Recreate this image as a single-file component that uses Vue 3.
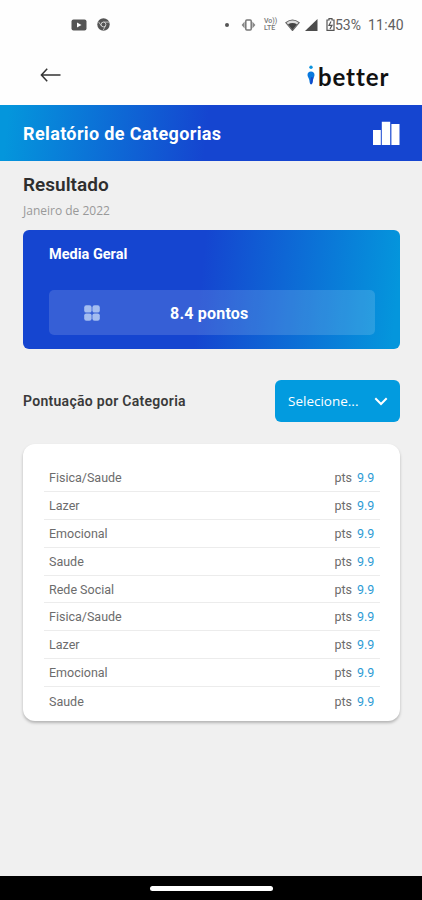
<template>
    <div class="screen">
        <div class="statusbar">
            <div class="apps">
                <svg width="16" height="12" viewBox="0 0 16 12">
                    <rect x="0.5" y="0.5" width="15" height="11" rx="2" fill="#555" />
                    <path d="M6 3.5 L10.5 6 L6 8.5 Z" fill="#fff" />
                </svg>
                <svg width="13" height="13" viewBox="0 0 13 13">
                    <circle cx="6.5" cy="6.5" r="6.2" fill="#555" />
                    <path d="M1.5 3.8 L4.5 8 M6.5 4.1 H12 M8.5 7.7 L6.2 12.3" stroke="#ccc" stroke-width="0.9" fill="none" />
                    <circle cx="6.5" cy="6.5" r="2.4" fill="#555" stroke="#ddd" stroke-width="0.9" />
                </svg>
            </div>
            <div class="system">
                <span class="dot"></span>
                <svg class="vibrate" width="15" height="12" viewBox="0 0 15 12">
                    <rect x="4.8" y="1" width="5.4" height="10" rx="1" fill="none" stroke="#777" stroke-width="1.5" />
                    <path d="M3.6 2.5 V9.5 L0.6 6 Z M11.4 2.5 V9.5 L14.4 6 Z" fill="#888" />
                </svg>
                <span class="volte">Vo))<br />LTE</span>
                <svg class="wifi" width="15" height="12" viewBox="0 0 15 12">
                    <path d="M0.8 3.6 Q7.5 -1.6 14.2 3.6 L7.5 11.6 Z" fill="#ddd" stroke="#666" stroke-width="1.1" />
                    <path d="M3 5.2 Q7.5 2.6 12 5.2 L7.5 11 Z" fill="#444" />
                </svg>
                <svg class="signal" width="13" height="12" viewBox="0 0 13 12">
                    <path d="M12.5 0 V12 H0 Z" fill="#4c4c4c" />
                </svg>
                <svg class="battery" width="9" height="13" viewBox="0 0 9 13">
                    <path d="M3 0.7 H6 V2 H8 V12.3 H1 V2 H3 Z" fill="none" stroke="#555" stroke-width="1.2" />
                    <path d="M5 3.5 L3 7.3 H6 L4 11" fill="none" stroke="#555" stroke-width="1.2" />
                </svg>
                <span class="percent">53%</span>
                <span class="clock">11:40</span>
            </div>
        </div>

        <header class="topbar">
            <svg class="back" width="21" height="14" viewBox="0 0 21 14">
                <path d="M7.2 0.8 L1.4 7 L7.2 13.2 M1.4 7 H20.5" fill="none" stroke="#333" stroke-width="1.5" />
            </svg>
            <div class="logo">
                <svg width="8" height="20" viewBox="0 0 8 20">
                    <circle cx="4" cy="2.2" r="1.7" fill="#0c93dd" />
                    <path d="M4 6.5 C6.2 6.5 7.5 8 7.5 10 C7.5 11.8 6.2 13 6 15 C5.8 17 5.2 19.4 4 19.4 C2.8 19.4 2.6 17 2.3 15 C2 13 0.5 11.8 0.5 10 C0.5 8 1.8 6.5 4 6.5 Z" fill="#0878de" />
                    <path d="M4 12 L6.4 12.5 L5.2 18.5 Q4 20 3.2 18 Z" fill="#1447ca" />
                </svg>
                <span>better</span>
            </div>
        </header>

        <div class="banner">
            <h1>Relatório de Categorias</h1>
            <svg width="28" height="25" viewBox="0 0 28 25">
                <path d="M1 9 H8.8 V24 H1 Z M9.8 0.8 H18.2 V24 H9.8 Z M19.4 3 H27.5 V24 H19.4 Z" fill="#fff" />
            </svg>
        </div>

        <main>
            <h2>Resultado</h2>
            <p class="date">Janeiro de 2022</p>

            <section class="average">
                <h3>Media Geral</h3>
                <div class="score">
                    <svg width="16" height="16" viewBox="0 0 16 16">
                        <g fill="#a4bdf0">
                            <rect x="0.2" y="0.2" width="7.4" height="7.4" rx="2.2" />
                            <rect x="8.4" y="0.2" width="7.4" height="7.4" rx="2.2" />
                            <rect x="0.2" y="8.4" width="7.4" height="7.4" rx="2.2" />
                            <rect x="8.4" y="8.4" width="7.4" height="7.4" rx="2.2" />
                        </g>
                    </svg>
                    <span>8.4 pontos</span>
                </div>
            </section>

            <div class="filter">
                <h4>Pontuação por Categoria</h4>
                <button type="button">
                    <span>Selecione...</span>
                    <svg width="14" height="9" viewBox="0 0 14 9">
                        <path d="M1.3 1.3 L7 7 L12.7 1.3" fill="none" stroke="#fff" stroke-width="2" />
                    </svg>
                </button>
            </div>

            <ul>
                <li v-for="(item, index) in items" :key="index">
                    <span class="name">{{ item.name }}</span>
                    <span class="pts">pts</span>
                    <span class="value">{{ item.value }}</span>
                </li>
            </ul>
        </main>

        <div class="navbar"><span></span></div>
    </div>
</template>

<script setup>
import { ref } from "vue";

const items = ref([
    { name: "Fisica/Saude", value: "9.9" },
    { name: "Lazer", value: "9.9" },
    { name: "Emocional", value: "9.9" },
    { name: "Saude", value: "9.9" },
    { name: "Rede Social", value: "9.9" },
    { name: "Fisica/Saude", value: "9.9" },
    { name: "Lazer", value: "9.9" },
    { name: "Emocional", value: "9.9" },
    { name: "Saude", value: "9.9" },
]);
</script>

<style>
body {
    margin: 0;
}
</style>

<style scoped>
* {
    box-sizing: border-box;
    margin: 0;
    padding: 0;
}

.screen {
    display: flex;
    flex-direction: column;
    width: 422px;
    height: 900px;
    background: #f0f0f0;
    font-family: Roboto, "Liberation Sans", sans-serif;
    overflow: hidden;
}

svg {
    display: block;
    flex: none;
}

.statusbar {
    display: flex;
    justify-content: space-between;
    align-items: center;
    height: 49px;
    padding: 0 17px 0 71px;
    background: #fefefe;
    color: #606060;
}

.apps,
.system {
    display: flex;
    align-items: center;
}

.apps {
    gap: 10px;
}

.dot {
    width: 4px;
    height: 4px;
    margin-right: 12px;
    border-radius: 50%;
    background: #555;
}

.volte {
    width: 15px;
    margin: 0 6px 0 8px;
    font-size: 7px;
    line-height: 6.5px;
    font-weight: 500;
    color: #777;
}

.wifi {
    margin-right: 5px;
}

.signal {
    margin-right: 8px;
}

.percent {
    width: 27px;
    margin-right: 6px;
    font-size: 14px;
    white-space: nowrap;
}

.clock {
    width: 37px;
    font-size: 14px;
    letter-spacing: 0.2px;
}

.topbar {
    display: flex;
    justify-content: space-between;
    align-items: center;
    height: 56px;
    padding: 0 31px 4px 40px;
    background: #fefefe;
}

.logo {
    display: flex;
    align-items: center;
    gap: 3px;
}

.logo span {
    width: 73px;
    padding-top: 4px;
    font: 700 24px/28px Lato, sans-serif;
    font-variant-ligatures: none;
    letter-spacing: 0.9px;
    color: #111;
}

.banner {
    display: flex;
    justify-content: space-between;
    align-items: center;
    height: 56px;
    padding: 0 22px 0 23px;
    background: linear-gradient(96deg, #0496dc 2%, #1545d0 49%);
}

h1 {
    font-size: 18px;
    font-weight: 700;
    letter-spacing: 0.37px;
    color: #fff;
}

main {
    flex: 1;
    padding: 12px 22px 0 23px;
}

h2 {
    font-size: 19px;
    font-weight: 600;
    line-height: 24px;
    color: #2e2e2e;
}

.date {
    margin-top: 6px;
    font: 400 12px/16px "Open Sans", sans-serif;
    color: #999;
}

.average {
    height: 119px;
    margin-top: 11px;
    padding: 16px 25px 0 26px;
    border-radius: 6px;
    background: linear-gradient(96deg, #1545d0 47%, #0496dc 98%);
    color: #fff;
}

h3 {
    font-size: 14.5px;
    font-weight: 700;
    line-height: 18px;
}

.score {
    display: grid;
    grid-template-columns: 86px 1fr;
    align-items: center;
    height: 45px;
    margin-top: 26px;
    padding-left: 35px;
    border-radius: 5px;
    background: rgba(255, 255, 255, 0.14);
    font-size: 16px;
    font-weight: 700;
    letter-spacing: 0.2px;
}

.score span {
    padding-top: 2px;
}

.filter {
    display: flex;
    justify-content: space-between;
    align-items: center;
    margin-top: 31px;
}

h4 {
    font-size: 14px;
    font-weight: 600;
    letter-spacing: 0.29px;
    color: #3a3a3a;
}

button {
    display: flex;
    justify-content: space-between;
    align-items: center;
    width: 125px;
    height: 42px;
    padding: 0 12px 0 13px;
    border: 0;
    border-radius: 6px;
    background: #029bdf;
    color: #fff;
    font: 400 13.5px "Open Sans", sans-serif;
}

ul {
    height: 277px;
    margin-top: 22px;
    padding: 20px 20px 0 21px;
    border-radius: 12px;
    background: #fff;
    box-shadow: 0 2px 3px rgba(0, 0, 0, 0.25);
    list-style: none;
}

li {
    display: flex;
    align-items: center;
    height: 27.9px;
    padding: 0 5px;
    border-bottom: 1px solid #ececec;
    font-size: 12.5px;
    color: #6c6c6c;
}

li:last-child {
    border-bottom: 0;
}

.name {
    flex: 1;
}

.value {
    width: 18px;
    margin-left: 5px;
    color: #2d9bd5;
}

.navbar {
    display: flex;
    justify-content: center;
    align-items: center;
    height: 24px;
    background: #000;
}

.navbar span {
    width: 123px;
    height: 5px;
    border-radius: 3px;
    background: #fff;
}
</style>
